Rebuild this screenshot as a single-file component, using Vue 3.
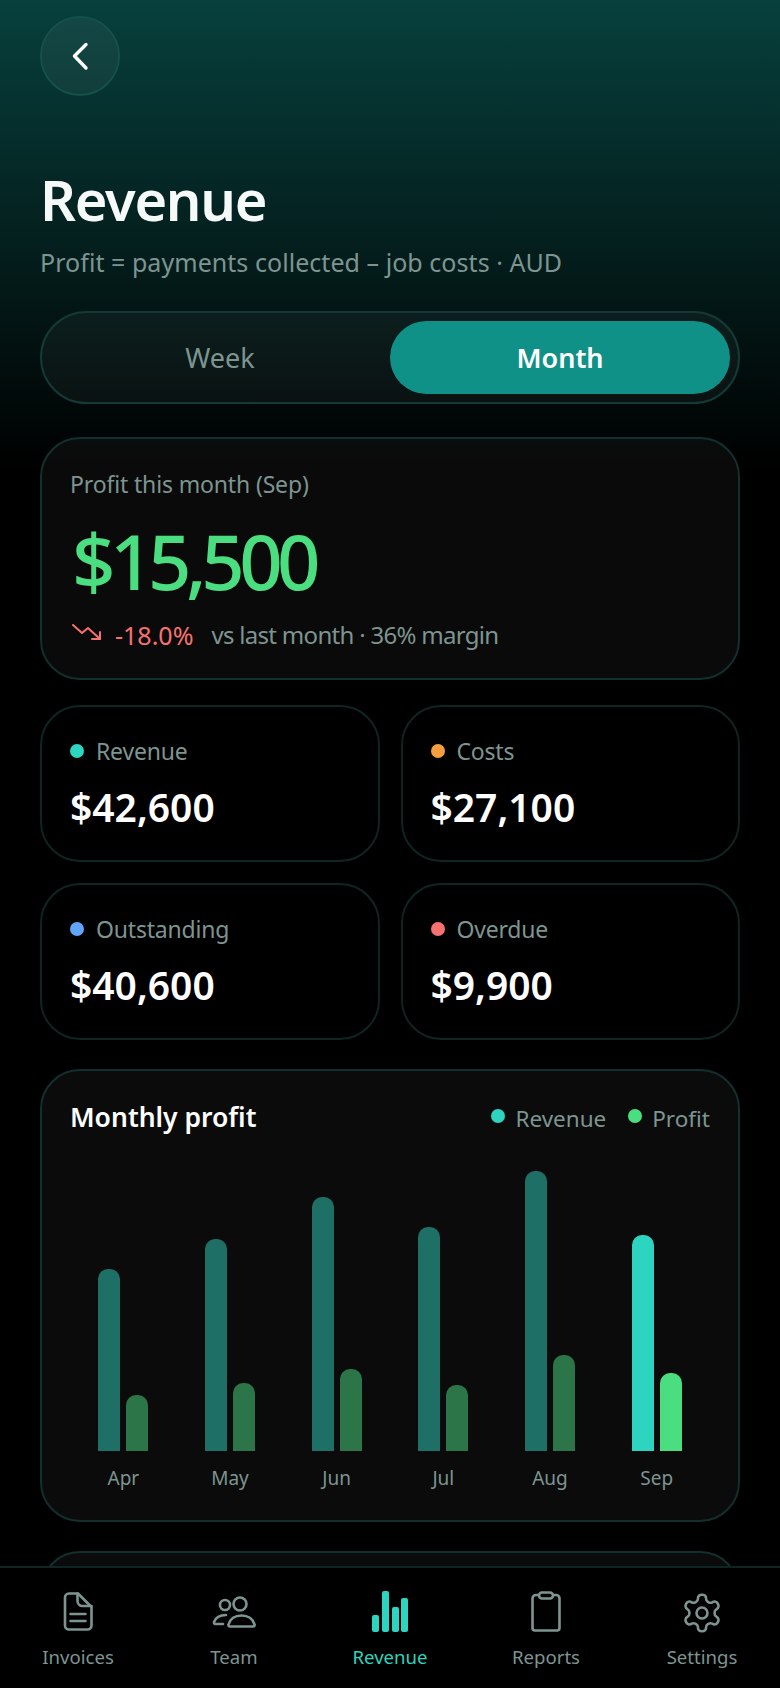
<template>
  <div class="page">
    <div class="content">
      <button class="back" aria-label="Back">
        <svg width="36" height="38" viewBox="0 0 36 38" fill="none" stroke="#fff" stroke-width="3.4" stroke-linecap="round" stroke-linejoin="round">
          <path d="M24 7.5 L12.5 19 L24 31" />
        </svg>
      </button>

      <h1>Revenue</h1>
      <p class="sub">Profit = payments collected – job costs · AUD</p>

      <div class="toggle">
        <div class="tab">Week</div>
        <div class="tab active">Month</div>
      </div>

      <section class="hero">
        <div class="hero-label">Profit this month (Sep)</div>
        <div class="hero-value">$15,500</div>
        <div class="hero-delta">
          <svg width="32" height="22" viewBox="0 0 32 22" fill="none" stroke="#f87171" stroke-width="2" stroke-linecap="round" stroke-linejoin="round">
            <path d="M3 3 L12 11 L18 6 L30 17" />
            <path d="M30 10 V17 H22" />
          </svg>
          <span class="down">-18.0%</span>
          <span class="muted">vs last month · 36% margin</span>
        </div>
      </section>

      <div class="stats">
        <div v-for="s in stats" :key="s.label" class="stat">
          <div class="stat-label">
            <i class="dot" :style="{ background: s.color }"></i>{{ s.label }}
          </div>
          <div class="stat-value">{{ s.value }}</div>
        </div>
      </div>

      <section class="chart-card">
        <div class="chart-head">
          <h2>Monthly profit</h2>
          <div class="legend">
            <span><i class="dot teal"></i>Revenue</span>
            <span><i class="dot green"></i>Profit</span>
          </div>
        </div>
        <div class="chart">
          <div v-for="(m, i) in months" :key="m.name" class="month">
            <div class="bars">
              <div class="bar rev" :class="{ now: i === months.length - 1 }" :style="{ height: m.rev + 'px' }"></div>
              <div class="bar prof" :class="{ now: i === months.length - 1 }" :style="{ height: m.prof + 'px' }"></div>
            </div>
            <div class="month-name">{{ m.name }}</div>
          </div>
        </div>
      </section>

      <section class="next-card"></section>
    </div>

    <nav class="tabbar">
      <div v-for="t in tabs" :key="t.name" class="nav-item" :class="{ on: t.name === 'Revenue' }">
        <svg v-if="t.name === 'Invoices'" width="44" height="44" viewBox="0 0 44 44" fill="none" stroke="currentColor" stroke-width="2.6" stroke-linecap="round" stroke-linejoin="round">
          <path d="M13 2.5 H22 L35.5 16 V34.5 A4 4 0 0 1 31.5 38.5 H13 A4 4 0 0 1 9 34.5 V6.5 A4 4 0 0 1 13 2.5 Z" />
          <path d="M21.5 2.5 V10 A5 5 0 0 0 26.5 15 H35.5" />
          <path d="M14.5 23 H29.5 M14.5 30 H29.5" />
        </svg>
        <svg v-else-if="t.name === 'Team'" width="44" height="44" viewBox="0 0 44 44" fill="none" stroke="currentColor" stroke-width="2.6" stroke-linecap="round" stroke-linejoin="round">
          <circle cx="28" cy="13" r="6.5" />
          <circle cx="13" cy="14" r="5" />
          <path d="M18 35.5 H41 A1.5 1.5 0 0 0 42.5 33.5 C41 28 36 24.5 29.5 24.5 C23 24.5 18 28 16.5 33.5 A1.5 1.5 0 0 0 18 35.5 Z" />
          <path d="M14 24 C8 24 3.5 27 2 31 A1.5 1.5 0 0 0 3.5 33 H11" />
        </svg>
        <svg v-else-if="t.name === 'Revenue'" width="44" height="44" viewBox="0 0 44 44" fill="currentColor">
          <rect x="4" y="24" width="7" height="17" rx="2" />
          <rect x="14" y="0" width="7" height="41" rx="2" />
          <rect x="24" y="16" width="7" height="25" rx="2" />
          <rect x="33" y="7" width="7" height="34" rx="2" />
        </svg>
        <svg v-else-if="t.name === 'Reports'" width="44" height="44" viewBox="0 0 44 44" fill="none" stroke="currentColor" stroke-width="2.6" stroke-linecap="round" stroke-linejoin="round">
          <path d="M15 4 H12 A3.5 3.5 0 0 0 8.5 7.5 V37 A2.5 2.5 0 0 0 11 39.5 H33 A2.5 2.5 0 0 0 35.5 37 V7.5 A3.5 3.5 0 0 0 32 4 H29" />
          <rect x="15" y="1.5" width="14" height="6" rx="3" />
        </svg>
        <svg v-else width="44" height="44" viewBox="0 0 24 24" fill="none" stroke="currentColor" stroke-width="1.4" stroke-linecap="round" stroke-linejoin="round">
          <path d="M12.22 2h-.44a2 2 0 0 0-2 2v.18a2 2 0 0 1-1 1.73l-.43.25a2 2 0 0 1-2 0l-.15-.08a2 2 0 0 0-2.73.73l-.22.38a2 2 0 0 0 .73 2.73l.15.1a2 2 0 0 1 1 1.72v.51a2 2 0 0 1-1 1.74l-.15.09a2 2 0 0 0-.73 2.73l.22.38a2 2 0 0 0 2.73.73l.15-.08a2 2 0 0 1 2 0l.43.25a2 2 0 0 1 1 1.73V20a2 2 0 0 0 2 2h.44a2 2 0 0 0 2-2v-.18a2 2 0 0 1 1-1.73l.43-.25a2 2 0 0 1 2 0l.15.08a2 2 0 0 0 2.73-.73l.22-.39a2 2 0 0 0-.73-2.73l-.15-.08a2 2 0 0 1-1-1.74v-.5a2 2 0 0 1 1-1.74l.15-.09a2 2 0 0 0 .73-2.73l-.22-.38a2 2 0 0 0-2.73-.73l-.15.08a2 2 0 0 1-2 0l-.43-.25a2 2 0 0 1-1-1.73V4a2 2 0 0 0-2-2z" />
          <circle cx="12" cy="12" r="3" />
        </svg>
        <span>{{ t.name }}</span>
      </div>
    </nav>
  </div>
</template>

<script setup>
const stats = [
  { label: "Revenue", value: "$42,600", color: "#2dd4bf" },
  { label: "Costs", value: "$27,100", color: "#f59e3f" },
  { label: "Outstanding", value: "$40,600", color: "#60a5fa" },
  { label: "Overdue", value: "$9,900", color: "#f87171" }
]

const months = [
  { name: "Apr", rev: 182, prof: 56 },
  { name: "May", rev: 212, prof: 68 },
  { name: "Jun", rev: 254, prof: 82 },
  { name: "Jul", rev: 224, prof: 66 },
  { name: "Aug", rev: 280, prof: 96 },
  { name: "Sep", rev: 216, prof: 78 }
]

const tabs = [
  { name: "Invoices" },
  { name: "Team" },
  { name: "Revenue" },
  { name: "Reports" },
  { name: "Settings" }
]
</script>

<style>
html, body {
  background: #000;
}
</style>

<style scoped>
.page {
  position: relative;
  width: 780px;
  height: 1688px;
  overflow: hidden;
  background: linear-gradient(180deg, #07403d 0, #000 470px);
  font-family: "Noto Sans", "Open Sans", sans-serif;
  color: #fff;
}

.content {
  padding: 16px 40px 0;
}

.back {
  display: flex;
  align-items: center;
  justify-content: center;
  width: 80px;
  height: 80px;
  padding: 0;
  border: 2px solid #155049;
  border-radius: 50%;
  background: rgba(255, 255, 255, 0.05);
}

h1 {
  margin: 63px 0 0;
  font-size: 56px;
  line-height: 80px;
  font-weight: 600;
  color: #f5faf9;
  letter-spacing: -1.3px;
}

.sub {
  margin: 5px 0 0;
  font-size: 25px;
  line-height: 36px;
  letter-spacing: 0.05px;
  color: #7d9591;
}

.toggle {
  display: grid;
  grid-template-columns: 1fr 1fr;
  height: 93px;
  margin-top: 31px;
  padding: 8px;
  box-sizing: border-box;
  border: 2px solid #133a36;
  border-radius: 47px;
  background: rgba(255, 255, 255, 0.04);
}

.tab {
  display: flex;
  align-items: center;
  justify-content: center;
  border-radius: 38px;
  font-size: 27px;
  color: #7d9591;
}

.tab.active {
  background: #109187;
  color: #fff;
  font-weight: 600;
}

.hero {
  height: 243px;
  margin-top: 33px;
  padding: 28px 28px;
  box-sizing: border-box;
  border: 2px solid #12302d;
  border-radius: 40px;
  background: rgba(255, 255, 255, 0.04);
}

.hero-label {
  font-size: 23px;
  line-height: 34px;
  letter-spacing: -0.15px;
  color: #7d9591;
}

.hero-value {
  margin: 14px 0 0 2px;
  font-size: 76px;
  line-height: 92px;
  font-weight: 500;
  letter-spacing: -5.5px;
  color: #4ade80;
}

.hero-delta {
  display: flex;
  align-items: center;
  margin-top: 11px;
  font-size: 24px;
  line-height: 34px;
}

.hero-delta svg {
  margin: -4px 13px 0 0;
}

.down {
  color: #f87171;
  font-size: 25px;
  margin-right: 18px;
}

.muted {
  color: #7d9591;
  letter-spacing: -0.7px;
}

.stats {
  display: grid;
  grid-template-columns: 1fr 1fr;
  gap: 21px;
  margin-top: 25px;
}

.stat {
  height: 157px;
  padding: 27px 28px;
  box-sizing: border-box;
  border: 2px solid #0e2522;
  border-radius: 40px;
}

.stat-label {
  display: flex;
  align-items: center;
  font-size: 23px;
  line-height: 34px;
  letter-spacing: -0.2px;
  color: #7d9591;
}

.dot {
  display: inline-block;
  width: 14px;
  height: 14px;
  margin-right: 12px;
  border-radius: 50%;
  flex: none;
}

.stat-value {
  margin-top: 13px;
  font-size: 39px;
  line-height: 52px;
  font-weight: 600;
}

.chart-card {
  height: 453px;
  margin-top: 29px;
  padding: 28px;
  box-sizing: border-box;
  border: 2px solid #12302d;
  border-radius: 40px;
  background: #0b0b0b;
}

.chart-head {
  display: flex;
  align-items: center;
  justify-content: space-between;
  height: 36px;
}

h2 {
  margin: 0;
  font-size: 26.5px;
  font-weight: 600;
  line-height: 36px;
}

.legend {
  display: flex;
  gap: 22px;
  padding-top: 3px;
  font-size: 22.5px;
  color: #7d9591;
}

.legend span {
  display: flex;
  align-items: center;
}

.legend .dot {
  margin-right: 10px;
  margin-top: -6px;
}

.teal {
  background: #2dd4bf;
}

.green {
  background: #4ade80;
}

.chart {
  display: grid;
  grid-template-columns: repeat(6, 1fr);
  height: 358px;
  align-items: end;
}

.month {
  display: flex;
  flex-direction: column;
  align-items: center;
}

.bars {
  display: flex;
  align-items: flex-end;
  gap: 6px;
}

.bar {
  width: 22px;
  border-radius: 10px 10px 0 0;
}

.bar.rev {
  background: #1e7067;
}

.bar.prof {
  background: #2c7548;
}

.bar.rev.now {
  background: #2dd4bf;
}

.bar.prof.now {
  background: #4ade80;
}

.month-name {
  margin-top: 12px;
  font-size: 19px;
  line-height: 30px;
  color: #7d9591;
}

.next-card {
  height: 300px;
  margin-top: 29px;
  border: 2px solid #12302d;
  border-radius: 40px;
  background: #0b0b0b;
}

.tabbar {
  position: absolute;
  left: 0;
  right: 0;
  bottom: 0;
  display: grid;
  grid-template-columns: repeat(5, 1fr);
  height: 122px;
  padding-top: 23px;
  box-sizing: border-box;
  border-top: 2px solid #0e2522;
  background: #000;
}

.nav-item {
  display: flex;
  flex-direction: column;
  align-items: center;
  color: #7d9591;
  font-size: 18.6px;
  line-height: 28px;
}

.nav-item svg {
  margin-bottom: 8px;
}

.nav-item.on {
  color: #2dd4bf;
}
</style>
